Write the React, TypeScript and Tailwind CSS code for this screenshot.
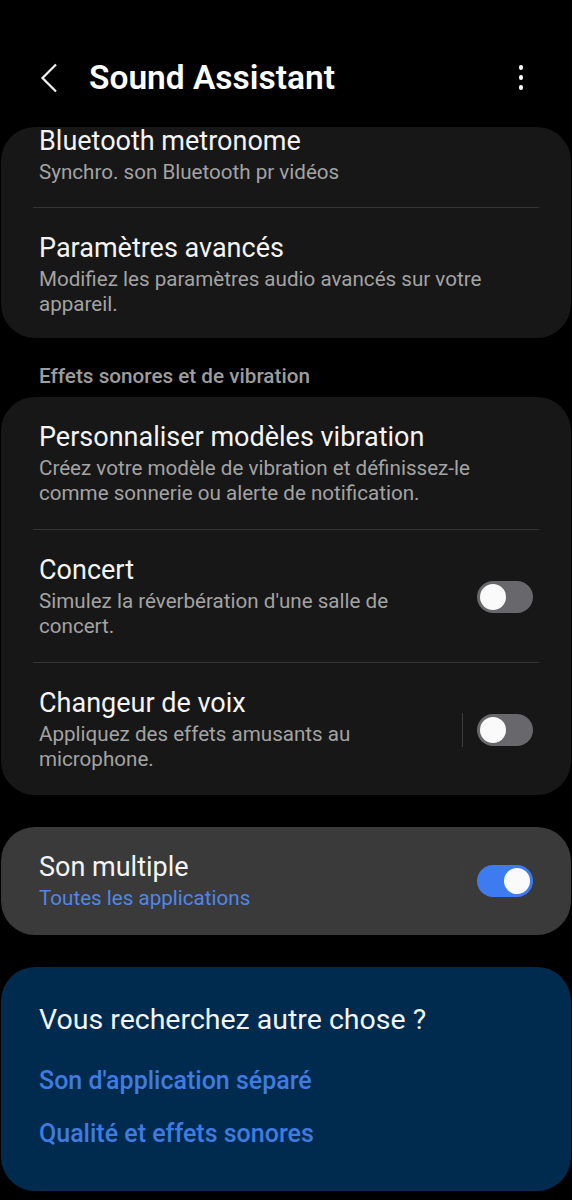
const font = { fontFamily: 'Roboto, "Noto Sans", sans-serif' };

function Toggle({ on }: { on?: boolean }) {
  return (
    <div
      className={`flex h-[32px] w-[56px] shrink-0 items-center rounded-full px-[3px] ${
        on ? "justify-end bg-[#3e7bf0]" : "justify-start bg-[#68686c]"
      }`}
    >
      <div className="h-[26px] w-[26px] rounded-full bg-[#fafafa]" />
    </div>
  );
}

function Row({
  title,
  sub,
  toggle,
  sep,
  blueSub,
  first,
  pb = "pb-[23px]",
}: {
  title: string;
  sub: string;
  toggle?: "on" | "off";
  sep?: boolean;
  blueSub?: boolean;
  first?: boolean;
  pb?: string;
}) {
  return (
    <div className={`flex items-center pl-[38px] pr-[38px] ${first ? "pt-0" : "pt-[24px]"} ${pb}`}>
      <div className="min-w-0 flex-1">
        <div className={`text-[27px] leading-[32px] text-[#f4f4f4] ${first ? "-mt-[2px]" : ""}`}>{title}</div>
        <div
          className={`mt-[3px] text-[20.6px] leading-[25px] ${blueSub ? "text-[#4f87e8]" : "text-[#a3a3a3]"}`}
        >
          {sub}
        </div>
      </div>
      {toggle && (
        <div className="flex items-center pl-[30px]">
          {sep && <div className="mr-[14px] h-[34px] w-px bg-[#3c3c3c]" />}
          <Toggle on={toggle === "on"} />
        </div>
      )}
    </div>
  );
}

function Divider() {
  return <div className="mx-[32px] h-px bg-[#333333]" />;
}

export default function App() {
  return (
    <div className="min-h-[1200px] w-[572px] bg-black" style={font}>
      {/* header */}
      <div className="flex h-[127px] items-center pl-[40px] pr-[49px] pt-[28px]">
        <svg width="18" height="30" viewBox="0 0 18 30" className="shrink-0">
          <path d="M16 1.5 L2.5 15 L16 28.5" fill="none" stroke="#f2f2f2" strokeWidth="2.2" />
        </svg>
        <h1 className="ml-[31px] flex-1 text-[33.5px] font-semibold leading-[40px] text-white">Sound Assistant</h1>
        <div className="flex flex-col gap-[5.5px]">
          <span className="h-[4.5px] w-[4.5px] rounded-full bg-white" />
          <span className="h-[4.5px] w-[4.5px] rounded-full bg-white" />
          <span className="h-[4.5px] w-[4.5px] rounded-full bg-white" />
        </div>
      </div>

      <div className="px-[1px]">
        <div className="rounded-[34px] bg-[#171717]">
          <Row first title="Bluetooth metronome" sub="Synchro. son Bluetooth pr vidéos" pb="pb-[22px]" />
          <Divider />
          <Row
            title="Paramètres avancés"
            sub="Modifiez les paramètres audio avancés sur votre appareil."
            pb="pb-[21px]"
          />
        </div>

        <div className="pb-[9px] pl-[38px] pt-[26px] text-[20.7px] font-medium leading-[24px] text-[#9d9d9d]">
          Effets sonores et de vibration
        </div>

        <div className="rounded-[34px] bg-[#171717]">
          <Row
            title="Personnaliser modèles vibration"
            sub="Créez votre modèle de vibration et définissez-le comme sonnerie ou alerte de notification."
          />
          <Divider />
          <Row title="Concert" sub="Simulez la réverbération d'une salle de concert." toggle="off" />
          <Divider />
          <Row title="Changeur de voix" sub="Appliquez des effets amusants au microphone." toggle="off" sep />
        </div>

        <div className="mt-[32px] rounded-[34px] bg-[#3a3a3a]">
          <Row title="Son multiple" sub="Toutes les applications" toggle="on" sep blueSub pb="pb-[24px]" />
        </div>

        <div className="mt-[32px] rounded-[34px] bg-[#002b4f] pb-[42px] pl-[38px] pr-[38px] pt-[36px]">
          <div className="text-[28.5px] leading-[34px] text-[#f4f4f4]">Vous recherchez autre chose ?</div>
          <div className="mt-[29px] text-[25px] font-medium leading-[30px] text-[#3f7be0]">
            Son d'application séparé
          </div>
          <div className="mt-[23px] text-[25px] font-medium leading-[30px] text-[#3f7be0]">
            Qualité et effets sonores
          </div>
        </div>
      </div>
    </div>
  );
}
